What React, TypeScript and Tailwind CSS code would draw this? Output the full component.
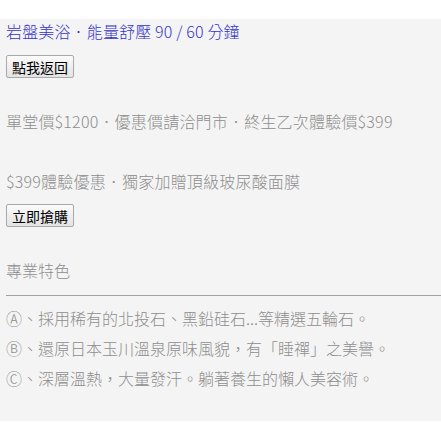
export default function App() {
  const font = { fontFamily: '"Noto Sans CJK TC", "Noto Sans", sans-serif' };
  const btn =
    "h-[23px] px-[5px] border border-[#a9a9a9] rounded-[2px] bg-gradient-to-b from-[#fbfbfb] to-[#e3e3e3] text-[14px] leading-[20px] text-black font-normal";
  return (
    <div className="w-[441px] h-[441px] bg-white pt-[19px]" style={font}>
      <div className="bg-[#f4f4f4] pl-[6px] pb-[26px] font-light">
        <div className="h-[28px] leading-[25px] text-[16px] text-[#3434c8] tracking-[0.15px]">
          岩盤美浴．能量舒壓 90 / 60 分鐘
        </div>
        <div className="mt-[8px] flex">
          <button className={btn}>點我返回</button>
        </div>
        <div className="mt-[31px] h-[28px] leading-[25px] text-[16px] text-[#8e8e8e] tracking-[0.2px]">
          單堂價$1200．優惠價請洽門市．終生乙次體驗價$399
        </div>
        <div className="mt-[32px] h-[28px] leading-[25px] text-[16px] text-[#8e8e8e] tracking-[0.2px]">
          $399體驗優惠．獨家加贈頂級玻尿酸面膜
        </div>
        <div className="mt-[7px] flex">
          <button className={btn}>立即搶購</button>
        </div>
        <div className="mt-[31px] h-[28px] leading-[25px] text-[16px] text-[#8e8e8e]">
          專業特色
        </div>
        <div className="mt-[9px] h-px bg-[#a0a0a0]" />
        <div className="mt-[9px] text-[16px] text-[#8e8e8e]">
          <div className="h-[30px] leading-[27px]">Ⓐ、採用稀有的北投石、黑鉛硅石...等精選五輪石。</div>
          <div className="h-[30px] leading-[27px]">Ⓑ、還原日本玉川溫泉原味風貌，有「睡禪」之美譽。</div>
          <div className="h-[30px] leading-[27px]">Ⓒ、深層溫熱，大量發汗。躺著養生的懶人美容術。</div>
        </div>
      </div>
    </div>
  );
}
